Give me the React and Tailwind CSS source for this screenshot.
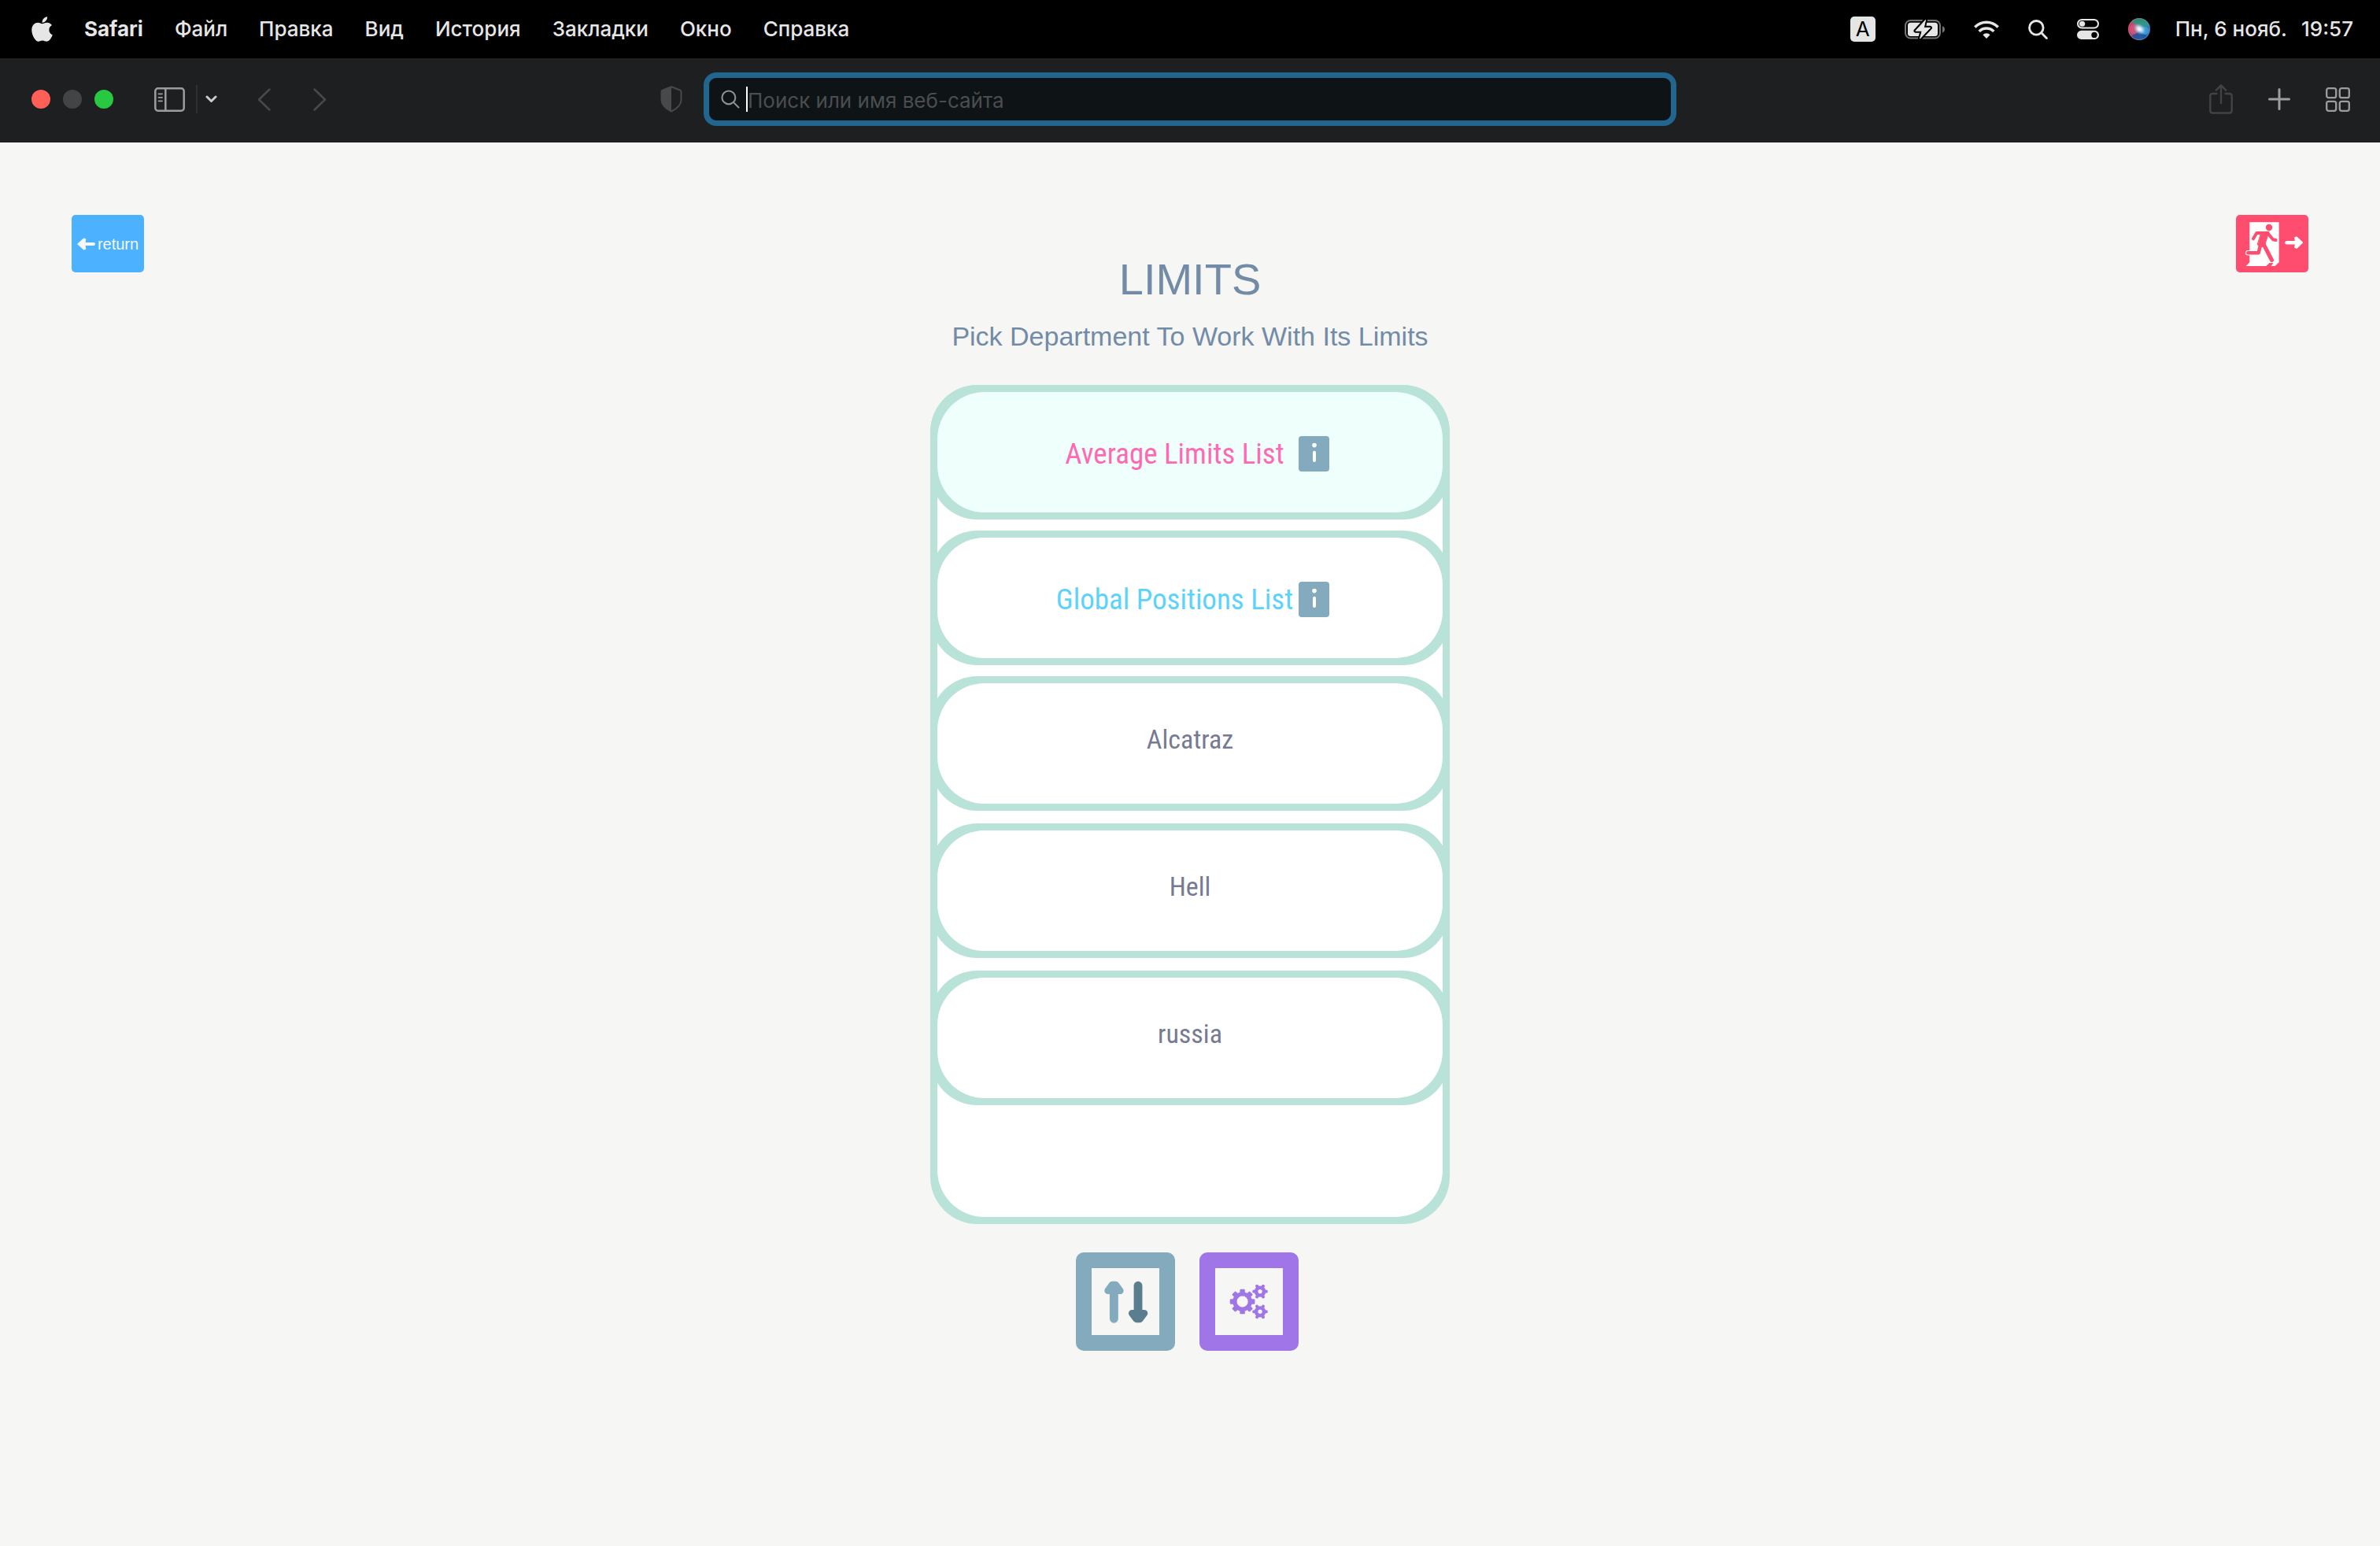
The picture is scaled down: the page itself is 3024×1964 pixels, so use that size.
import React from "react";
import { FaApple } from "react-icons/fa";

const MENU = ["Файл", "Правка", "Вид", "История", "Закладки", "Окно", "Справка"];
const LISTS = [
  { name: "Average Limits List", tone: "text-[#ff69b4]", fill: "bg-[#effffc]" },
  { name: "Global Positions List", tone: "text-[#5cd2fc]", fill: "bg-white" },
];
const DEPARTMENTS = ["Alcatraz", "Hell", "russia"];

const BatteryIcon = () => (
  <svg width="51" height="25" viewBox="0 0 51 25" aria-hidden="true">
    <rect x="1" y="1" width="44" height="22.5" rx="6.5" fill="none" stroke="#757575" strokeWidth="2" />
    <rect x="4" y="3.7" width="38" height="17.2" rx="3.5" fill="#e6e6e6" />
    <path d="M48 8.2c2 .6 3 2.2 3 4s-1 3.5-3 4.2z" fill="#757575" />
    <path d="M26.5.5 14 14.2h8.2L19.5 24 32.5 10.3h-8.2z" fill="#e6e6e6" stroke="#000" strokeWidth="5" strokeLinejoin="round" />
    <path d="M26.5.5 14 14.2h8.2L19.5 24 32.5 10.3h-8.2z" fill="#e6e6e6" stroke="#e6e6e6" strokeWidth="1" strokeLinejoin="round" />
  </svg>
);

const WifiIcon = () => (
  <svg width="32" height="24" viewBox="0 0 32 24" fill="none" stroke="#e6e6e6" strokeWidth="3.4" aria-hidden="true">
    <path d="M1.3 9.5a20.5 20.5 0 0 1 29.4 0" />
    <path d="M6.7 14.9a13 13 0 0 1 18.6 0" />
    <path d="M16 24l-4.6-4.8a6.5 6.5 0 0 1 9.2 0z" fill="#e6e6e6" stroke="none" />
  </svg>
);

const SearchIcon = ({ size, color, stroke }) => (
  <svg width={size} height={size} viewBox="0 0 25 25" fill="none" stroke={color} strokeWidth={stroke} strokeLinecap="round" aria-hidden="true">
    <circle cx="10.3" cy="10.3" r="8.8" />
    <path d="M16.8 16.8l6.6 6.6" />
  </svg>
);

const ControlCenterIcon = () => (
  <svg width="28" height="26" viewBox="0 0 28 26" aria-hidden="true">
    <rect x="1" y="1" width="26" height="10.5" rx="5.25" fill="none" stroke="#e6e6e6" strokeWidth="2" />
    <circle cx="6.6" cy="6.25" r="3.6" fill="#e6e6e6" />
    <rect x="0" y="14.8" width="28" height="11.2" rx="5.6" fill="#e6e6e6" />
    <circle cx="22" cy="20.4" r="3.7" fill="#000" />
  </svg>
);

const SiriIcon = () => (
  <svg width="28" height="28" viewBox="0 0 28 28" aria-hidden="true">
    <defs>
      <radialGradient id="siri-core">
        <stop offset="0" stopColor="#fff" />
        <stop offset=".35" stopColor="#e8f6ff" stopOpacity=".85" />
        <stop offset="1" stopColor="#9fd0ff" stopOpacity="0" />
      </radialGradient>
      <linearGradient id="siri-base" x1="0" y1=".4" x2="1" y2=".6">
        <stop offset="0" stopColor="#e0355f" />
        <stop offset=".4" stopColor="#8d5c86" />
        <stop offset=".65" stopColor="#3b8fc0" />
        <stop offset="1" stopColor="#1668b8" />
      </linearGradient>
      <linearGradient id="siri-top" x1="0" y1="0" x2="0" y2="1">
        <stop offset="0" stopColor="#2c8a6c" />
        <stop offset=".5" stopColor="#2c9a80" stopOpacity=".85" />
        <stop offset="1" stopColor="#2c9a86" stopOpacity="0" />
      </linearGradient>
    </defs>
    <circle cx="14" cy="14" r="14" fill="url(#siri-base)" />
    <path d="M4.5 4a14 14 0 0 1 23.3 8L14 14z" fill="url(#siri-top)" />
    <path d="M4 23a14 14 0 0 0 20 0l-9-8z" fill="#174c9c" opacity=".75" />
    <ellipse cx="8" cy="14" rx="6" ry="6.5" fill="#f0607f" opacity=".45" />
    <ellipse cx="21" cy="16" rx="6" ry="5" fill="#4fb4f0" opacity=".5" />
    <ellipse cx="14.5" cy="14" rx="8.5" ry="6.5" transform="rotate(38 14.5 14)" fill="url(#siri-core)" />
    <circle cx="14" cy="14" r="13.5" fill="none" stroke="#8a8f98" strokeOpacity=".5" />
  </svg>
);

const SidebarIcon = () => (
  <svg width="39" height="31" viewBox="0 0 39 31" fill="none" stroke="#9c9da0" strokeWidth="2.5" aria-hidden="true">
    <rect x="1.3" y="1.3" width="36.4" height="28.4" rx="3.5" />
    <path d="M14.3 1v29" />
    <path d="M5.5 8.3h4.5M5.5 12.8h4.5M5.5 17.3h4.5" strokeWidth="1.8" strokeLinecap="round" />
  </svg>
);

const AngleIcon = ({ d, w, h, color, stroke }) => (
  <svg width={w} height={h} viewBox={`0 0 ${w} ${h}`} fill="none" stroke={color} strokeWidth={stroke} strokeLinecap="round" strokeLinejoin="round" aria-hidden="true">
    <path d={d} />
  </svg>
);

const ShieldIcon = () => (
  <svg width="28" height="34" viewBox="0 0 28 34" aria-hidden="true">
    <path d="M14 1.3 25 5.5q1.5.6 1.5 2.3v10.5c0 6.2-4.3 10.2-12.5 14.2C5.8 28.5 1.5 24.5 1.5 18.3V7.8q0-1.7 1.5-2.3z" fill="none" stroke="#48494b" strokeWidth="2" />
    <path d="M14 1.3v31.2C5.8 28.5 1.5 24.5 1.5 18.3V7.8q0-1.7 1.5-2.3z" fill="#48494b" />
  </svg>
);

const ShareIcon = () => (
  <svg width="30" height="38" viewBox="0 0 30 38" fill="none" stroke="#424345" strokeWidth="2.4" strokeLinecap="round" strokeLinejoin="round" aria-hidden="true">
    <path d="M9.5 12H4.2Q1.3 12 1.3 15v18.5q0 3 2.9 3h21.6q2.9 0 2.9-3V15q0-3-2.9-3h-5.3" />
    <path d="M15 24V2M8.8 7.6 15 1.3l6.2 6.3" />
  </svg>
);

const PlusIcon = () => (
  <svg width="28" height="28" viewBox="0 0 28 28" fill="none" stroke="#9c9da0" strokeWidth="3" strokeLinecap="round" aria-hidden="true">
    <path d="M14 1.5v25M1.5 14h25" />
  </svg>
);

const TabsIcon = () => (
  <svg width="31" height="31" viewBox="0 0 31 31" fill="none" stroke="#9c9da0" strokeWidth="2.3" aria-hidden="true">
    <rect x="1.2" y="1.2" width="12" height="12" rx="2.5" />
    <rect x="17.8" y="1.2" width="12" height="12" rx="2.5" />
    <rect x="1.2" y="17.8" width="12" height="12" rx="2.5" />
    <rect x="17.8" y="17.8" width="12" height="12" rx="2.5" />
  </svg>
);

const ReturnArrow = () => (
  <svg width="23" height="16" viewBox="0 0 23 16" aria-hidden="true">
    <path d="M1 8 8.5 1.2l2 .8-1 6 1 6-2 .8z" fill="#f4f8fb" stroke="#f4f8fb" strokeWidth="1.5" strokeLinejoin="round" />
    <path d="M8 8h13" stroke="#f4f8fb" strokeWidth="4" strokeLinecap="round" />
  </svg>
);

const ExitIcon = () => (
  <svg width="92" height="73" viewBox="0 0 92 73" fill="none" strokeLinecap="round" strokeLinejoin="round" aria-hidden="true">
    <path d="M17.3 9.3h37.3v51L49.5 65H12.7l4.6-4.7z" fill="#fff" />
    <path d="M32 48.3H15.3" stroke="#fff" strokeWidth="6.5" />
    <g stroke="#ff4d6f">
      <circle cx="42" cy="16" r="4.2" fill="#ff4d6f" stroke="none" />
      <path d="M22 30.3l4.3-7.3H40" strokeWidth="4" />
      <path d="M41 24l6 7.2 3.6.8" strokeWidth="4" />
      <path d="M32.5 21.5H42L37 37l-4 4-5.5-3z" fill="#ff4d6f" strokeWidth="1" />
      <path d="M31 38l-2.3 10.3H15.3" strokeWidth="4.5" />
      <path d="M35 37l10.5 20.5" strokeWidth="5" />
      <path d="M38.5 65l4-4h4.7l-2.4 4z" fill="#ff4d6f" stroke="none" />
    </g>
    <path d="M64.5 35.2h15" stroke="#fff" strokeWidth="4.4" />
    <path d="M84.3 35.2 77 28.3l-2 .8 1 6.1-1 6.1 2 .8z" fill="#fff" stroke="#fff" strokeWidth="1.6" />
  </svg>
);

const InfoIcon = () => (
  <svg width="39" height="45" viewBox="0 0 39 45" aria-hidden="true">
    <rect width="39" height="45" rx="4" fill="#83aabd" />
    <circle cx="20" cy="11.6" r="2.8" fill="#fff" />
    <rect x="18" y="18.7" width="4" height="14.3" rx="2" fill="#fff" />
  </svg>
);

const SortIcon = () => (
  <svg width="86" height="85" viewBox="0 0 87 86" strokeLinecap="round" strokeLinejoin="round" aria-hidden="true">
    <g fill="#83aabd" stroke="#83aabd">
      <path d="M21 29l5.5-7.5h4.4l5.7 7.5z" strokeWidth="9" />
      <path d="M28.7 30v35" strokeWidth="11" />
    </g>
    <g fill="#5b7e8f" stroke="#5b7e8f">
      <path d="M52 58l5.5 7.5h4.4l5.7-7.5z" strokeWidth="9" />
      <path d="M59.7 22.5V57" strokeWidth="11" />
    </g>
  </svg>
);

const Gear = ({ cx, cy, outer, body, hole, tooth, angles }) => (
  <g transform={`translate(${cx} ${cy})`}>
    {angles.map((a) => (
      <rect key={a} x={-tooth / 2} y={-outer} width={tooth} height={outer - hole} rx="1.2" transform={`rotate(${a})`} fill="#9f75e8" />
    ))}
    <circle r={(body + hole) / 2} fill="none" stroke="#9f75e8" strokeWidth={body - hole} />
  </g>
);

const GearsIcon = () => (
  <svg width="86" height="85" viewBox="0 0 87 86" aria-hidden="true">
    <Gear cx={35} cy={43} outer={16} body={12.5} hole={7.3} tooth={6.5} angles={[0, 45, 90, 135, 180, 225, 270, 315]} />
    <Gear cx={57.7} cy={30} outer={9.8} body={7.3} hole={2.8} tooth={3.8} angles={[30, 90, 150, 210, 270, 330]} />
    <Gear cx={57.7} cy={56} outer={9.8} body={7.3} hole={2.8} tooth={3.8} angles={[30, 90, 150, 210, 270, 330]} />
  </svg>
);

function MenuBar() {
  return (
    <header className="flex h-[74px] items-center justify-between bg-black pl-10 pr-[34px] font-['Inter',sans-serif] text-[26px] font-medium leading-8 text-[#e6e6e6]">
      <nav aria-label="Safari" className="flex items-center gap-10">
        <button aria-label="Apple" className="flex"><FaApple className="h-9 w-[27px] shrink-0" /></button>
        <button className="font-bold">Safari</button>
        {MENU.map((m) => <button key={m}>{m}</button>)}
      </nav>
      <div className="flex items-center gap-8">
        <div className="flex items-center gap-[37px]">
          <span className="flex size-8 items-center justify-center rounded-[5px] bg-[#e4e6e5] font-normal text-black">A</span>
          <BatteryIcon />
          <WifiIcon />
          <SearchIcon size={25} color="#e6e6e6" stroke={2.8} />
          <ControlCenterIcon />
          <SiriIcon />
        </div>
        <time className="flex gap-[18px]"><span>Пн, 6 нояб.</span><span>19:57</span></time>
      </div>
    </header>
  );
}

function Toolbar() {
  return (
    <div className="grid h-[107px] grid-cols-[894fr_1236fr_894fr] items-center bg-[#1e1f21] pb-[3px]">
      <div className="flex items-center pl-10 pr-[27px]">
        <div className="mr-[52px] flex gap-4">
          <button aria-label="Закрыть" className="size-6 rounded-full bg-[#ff5f57]" />
          <button aria-label="Свернуть" className="size-6 rounded-full bg-[#434446]" />
          <button aria-label="Развернуть" className="size-6 rounded-full bg-[#28c840]" />
        </div>
        <button aria-label="Боковое меню" className="mr-[14px]"><SidebarIcon /></button>
        <span className="h-9 w-0.5 bg-[#2f3032]" />
        <button aria-label="Группы вкладок" className="ml-2.5">
          <AngleIcon w={15} h={10} d="M2 2l5.5 5.5L13 2" color="#c9cacb" stroke={3} />
        </button>
        <button aria-label="Назад" className="ml-[51px]">
          <AngleIcon w={17} h={29} d="M15.5 1.5 2 14.5l13.5 13" color="#48494b" stroke={2.5} />
        </button>
        <button aria-label="Вперед" className="ml-[54px]">
          <AngleIcon w={17} h={29} d="M1.5 1.5 15 14.5l-13.5 13" color="#48494b" stroke={2.5} />
        </button>
        <button aria-label="Конфиденциальность" className="ml-auto"><ShieldIcon /></button>
      </div>
      <label className="flex h-[68px] items-center rounded-2xl border-[7px] border-[#22658f] bg-[#0e1316] pl-[15px]">
        <SearchIcon size={24} color="#8e9092" stroke={2.2} />
        <span className="ml-2 h-8 w-0.5 bg-white" />
        <input
          aria-label="Поиск или имя веб-сайта"
          placeholder="Поиск или имя веб-сайта"
          className="h-9 min-w-0 flex-1 bg-transparent pt-0.5 font-['Inter',sans-serif] text-[26px] leading-8 text-white outline-none placeholder:text-[#4b4d4f]"
        />
      </label>
      <div className="flex items-center justify-end gap-[45px] pr-[38px]">
        <button aria-label="Поделиться"><ShareIcon /></button>
        <button aria-label="Новая вкладка"><PlusIcon /></button>
        <button aria-label="Обзор вкладок"><TabsIcon /></button>
      </div>
    </div>
  );
}

function LimitsPage() {
  return (
    <main className="grid flex-1 grid-cols-[1fr_auto_1fr] items-start bg-[#f6f6f4] px-[91px] pt-[92px] pb-16 font-['Liberation_Sans',Arial,sans-serif]">
      <button className="flex h-[73px] w-[92px] items-center justify-center gap-[3px] rounded-[5px] bg-[#4cb1ff] text-xl leading-6 text-[#f4f8fb]">
        <ReturnArrow />
        return
      </button>
      <div className="flex flex-col items-center pt-[50px] text-[#728ba6]">
        <h1 className="text-[56px] leading-[64px]">LIMITS</h1>
        <p className="mt-5 text-[34px] leading-10">Pick Department To Work With Its Limits</p>
        <section className="mt-[42px] w-[660px] rounded-[60px] bg-[#b9e3d9] p-[9px] font-['Roboto_Condensed','Liberation_Sans',sans-serif]">
          <div className="flex flex-col rounded-[60px] bg-white pb-[142px]">
            <div className="-mx-[9px] -mt-[9px]">
              <ul className="flex flex-col gap-3.5 pb-3.5">
                {LISTS.map((l) => (
                  <li key={l.name} className="rounded-[60px] bg-[#b9e3d9] p-[9px]">
                    <div className={`flex h-[153px] items-center justify-center rounded-[60px] pt-1 ${l.fill}`}>
                      <div className="flex w-[354px] items-center">
                        <button className={`flex-1 text-[37px] leading-[44px] ${l.tone}`}>{l.name}</button>
                        <button aria-label={`About ${l.name}`}><InfoIcon /></button>
                      </div>
                    </div>
                  </li>
                ))}
              </ul>
              <ul className="flex flex-col gap-4">
                {DEPARTMENTS.map((d) => (
                  <li key={d} className="rounded-[60px] bg-[#b9e3d9] p-[9px]">
                    <button className="block h-[153px] w-full rounded-[60px] bg-white pb-3 text-[34px] leading-[44px] text-[#767a92]">{d}</button>
                  </li>
                ))}
              </ul>
            </div>
          </div>
        </section>
        <div className="mt-9 flex gap-[31px] pr-2">
          <button aria-label="Sort" className="rounded-[10px] bg-[#83aabd] p-5"><span className="block bg-[#f6f6f4]"><SortIcon /></span></button>
          <button aria-label="Settings" className="rounded-[10px] bg-[#9f75e8] p-5"><span className="block bg-[#f6f6f4]"><GearsIcon /></span></button>
        </div>
      </div>
      <button aria-label="Exit" className="justify-self-end rounded-[5px] bg-[#ff4d6f]"><ExitIcon /></button>
    </main>
  );
}

export default function App() {
  return (
    <div className="flex min-h-screen flex-col">
      <MenuBar />
      <Toolbar />
      <LimitsPage />
    </div>
  );
}
